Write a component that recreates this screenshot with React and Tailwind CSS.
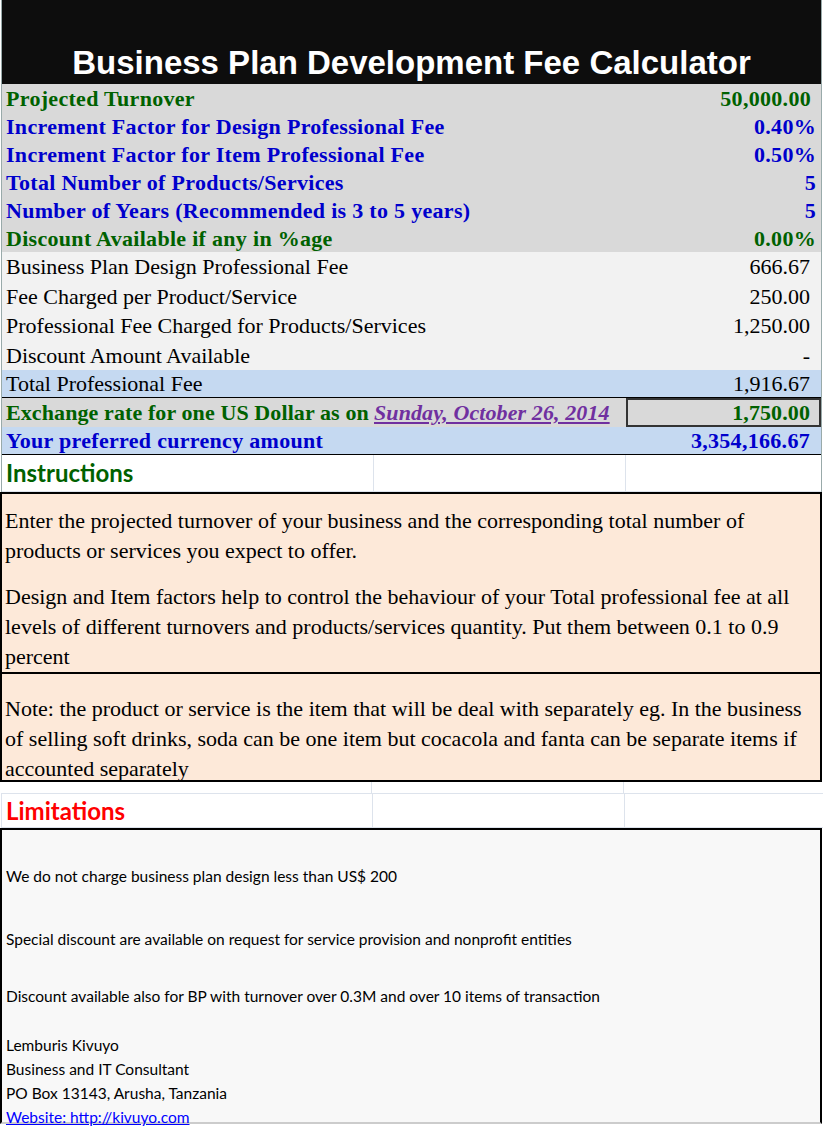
import React from "react";

const serif = { fontFamily: '"Liberation Serif", "Times New Roman", serif' };
const sans = { fontFamily: 'Lato, "Open Sans", sans-serif' };

const inputs = [
  ["Projected Turnover", "50,000.00", "text-[#006100]", "pr-[10px]"],
  ["Increment Factor for Design Professional Fee", "0.40%", "text-[#0000cc]", "pr-[5px]"],
  ["Increment Factor for Item Professional Fee", "0.50%", "text-[#0000cc]", "pr-[5px]"],
  ["Total Number of Products/Services", "5", "text-[#0000cc]", "pr-[5px]"],
  ["Number of Years (Recommended is 3 to 5 years)", "5", "text-[#0000cc]", "pr-[5px]"],
  ["Discount Available if any in %age", "0.00%", "text-[#006100]", "pr-[5px]"],
];

const results = [
  ["Business Plan Design Professional Fee", "666.67"],
  ["Fee Charged per Product/Service", "250.00"],
  ["Professional Fee Charged for Products/Services", "1,250.00"],
  ["Discount Amount Available", "-"],
];

export default function App() {
  return (
    <div className="w-[823px] h-[1129px] bg-white overflow-hidden" style={serif}>
      <div className="mx-[1px] border-x border-[#9aa] w-[821px]">
        <div className="bg-[#0d0d0d] h-[84px] flex items-end justify-center pb-[1px]">
          <h1 className="text-white font-bold text-[33px] leading-[40px]" style={{ fontFamily: '"Liberation Sans", Arial, sans-serif' }}>
            Business Plan Development Fee Calculator
          </h1>
        </div>
        <div className="bg-[#d9d9d9]">
          {inputs.map(([l, v, c, p]) => (
            <div key={l} className={`h-[28px] flex justify-between items-center pl-[4px] ${p} font-bold text-[22px] tracking-[0.3px] ${c}`}>
              <span>{l}</span>
              <span>{v}</span>
            </div>
          ))}
        </div>
        <div className="bg-[#f2f2f2]">
          {results.map(([l, v]) => (
            <div key={l} className="h-[29.5px] flex justify-between items-center pl-[4px] pr-[11px] text-[22px] text-black">
              <span>{l}</span>
              <span>{v}</span>
            </div>
          ))}
        </div>
        <div className="bg-[#c5d9f1] h-[28px] flex justify-between items-center pl-[4px] pr-[11px] text-[22px] border-b border-black">
          <span>Total Professional Fee</span>
          <span>1,916.67</span>
        </div>
        <div className="bg-[#d9d9d9] h-[29px] flex items-center font-bold text-[22px] tracking-[0.1px] text-[#006100]">
          <span className="pl-[4px] w-[372px] whitespace-nowrap">Exchange rate for one US Dollar as on</span>
          <span className="w-[252px] italic underline text-[#7030a0] whitespace-nowrap">Sunday, October 26, 2014</span>
          <span className="flex-1 h-full border-2 border-[#333] flex items-center justify-end pr-[9px]">1,750.00</span>
        </div>
        <div className="bg-[#c5d9f1] h-[28px] flex justify-between items-center pl-[4px] pr-[11px] font-bold text-[22px] tracking-[0.3px] text-[#0000cc] border-b border-black">
          <span>Your preferred currency amount</span>
          <span>3,354,166.67</span>
        </div>
        <div className="h-[37px] flex border-b border-[#dde3ec]">
          <div className="w-[372px] border-r border-[#dde3ec] pl-[4px] flex items-center text-[24px] font-bold text-[#006100]" style={sans}>Instructions</div>
          <div className="w-[252px] border-r border-[#dde3ec]" />
        </div>
      </div>
      <div className="bg-[#fde9d9] border-2 border-black w-[822px] h-[290px] text-[22px] leading-[30px] text-black flex flex-col">
        <div className="pl-[3px] pr-[4px] pt-[12px] h-[178px]">
          <p>Enter the projected turnover of your business and the corresponding total number of products or services you expect to offer.</p>
          <p className="mt-[16px]">Design and Item factors help to control the behaviour of your Total professional fee at all levels of different turnovers and products/services quantity. Put them between 0.1 to 0.9 percent</p>
        </div>
        <div className="border-t-2 border-black pl-[3px] pr-[4px] pt-[20px] flex-1">
          <p>Note: the product or service is the item that will be deal with separately eg. In the business of selling soft drinks, soda can be one item but cocacola and fanta can be separate items if accounted separately</p>
        </div>
      </div>
      <div className="h-[11px] flex ml-[1px]">
        <div className="w-[371px] border-r border-[#dde3ec]" />
        <div className="w-[252px] border-r border-[#dde3ec]" />
      </div>
      <div className="h-[35px] flex border-y border-[#dde3ec] border-l ml-[1px]">
        <div className="w-[371px] border-r border-[#dde3ec] pl-[4px] flex items-center text-[24px] font-bold text-[#ff0000]" style={sans}>Limitations</div>
        <div className="w-[252px] border-r border-[#dde3ec]" />
      </div>
      <div className="bg-[#f8f8f8] border-2 border-black border-b-[#ccc] w-[822px] h-[296px] pl-[4px] text-[15.5px] text-black" style={sans}>
        <p className="mt-[35px]">We do not charge business plan design less than US$ 200</p>
        <p className="mt-[40px]">Special discount are available on request for service provision and nonprofit entities</p>
        <p className="mt-[33px]">Discount available also for BP with turnover over 0.3M and over 10 items of transaction</p>
        <div className="mt-[25px] leading-[24px]">
          <p>Lemburis Kivuyo</p>
          <p>Business and IT Consultant</p>
          <p>PO Box 13143, Arusha, Tanzania</p>
          <p className="text-[#0000ff] underline">Website: http://kivuyo.com </p>
        </div>
      </div>
    </div>
  );
}
